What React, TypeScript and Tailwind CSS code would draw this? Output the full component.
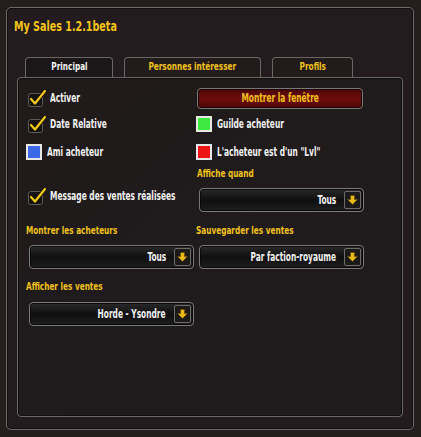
import React from "react";

const FONT = "[font-family:'DejaVu_Sans_Condensed','DejaVu_Sans',sans-serif]";

// the game UI font is much narrower than anything installed, so squeeze the text horizontally
function Narrow({ children, origin = "origin-left" }: { children: React.ReactNode; origin?: string }) {
  return <span className={"inline-block whitespace-nowrap scale-x-[0.69] " + origin}>{children}</span>;
}

function CheckBox({ label }: { label: string }) {
  return (
    <div className="flex h-[16px] items-center">
      <svg width="22" height="18" viewBox="0 0 22 18" className="ml-[1px] shrink-0">
        <rect x="1.5" y="4.5" width="14" height="13" rx="2" fill="#151212" stroke="#5e5a58" />
        <path d="M4 10 L8 14.5 L18 2" fill="none" stroke="#1a1200" strokeWidth="4" strokeLinecap="round" strokeLinejoin="round" />
        <path d="M4 10 L8 14.5 L18 2" fill="none" stroke="#f2c81c" strokeWidth="2.2" strokeLinecap="round" strokeLinejoin="round" />
      </svg>
      <span className="ml-[1px] text-[12px] font-bold text-[#f1f1f1]">
        <Narrow>{label}</Narrow>
      </span>
    </div>
  );
}

function Swatch({ color, label }: { color: string; label: string }) {
  return (
    <div className="flex h-[16px] items-center">
      <div className="h-[16px] w-[16px] shrink-0 border-2 border-[#e8e8e8]" style={{ backgroundColor: color }} />
      <span className="ml-[5px] text-[12px] font-bold text-[#f1f1f1]">
        <Narrow>{label}</Narrow>
      </span>
    </div>
  );
}

function Label({ text, className = "" }: { text: string; className?: string }) {
  return (
    <div className={"h-[14px] whitespace-nowrap text-[11px] font-bold leading-[14px] text-[#f2c21a] " + className}>
      <span className="inline-block origin-left scale-x-[0.74]">{text}</span>
    </div>
  );
}

function Dropdown({ value }: { value: string }) {
  return (
    <div className="ml-[3px] flex h-[24px] w-[165px] items-center rounded-[4px] border border-[#7c7a78] bg-gradient-to-b from-[#2b2b2b] via-[#0f0f0f] to-[#1e1e1e] shadow-[inset_0_0_0_1px_#0a0a0a]">
      <span className="flex-1 whitespace-nowrap pr-[8px] text-right text-[12px] font-bold text-[#f2f2f2]">
        <Narrow origin="origin-right">{value}</Narrow>
      </span>
      <div className="mr-[2px] flex h-[18px] w-[17px] items-center justify-center rounded-[2px] border border-[#6e6c6a] bg-[#1c1a18]">
        <svg width="11" height="10" viewBox="0 0 11 10">
          <path d="M3.5 0.5 H7.5 V4.5 H10.5 L5.5 9.5 L0.5 4.5 H3.5 Z" fill="#e9b916" stroke="#5a4208" strokeWidth="0.6" />
        </svg>
      </div>
    </div>
  );
}

function Tab({ text, active, width }: { text: string; active?: boolean; width: string }) {
  return (
    <div
      className={
        "flex h-[20px] items-center justify-center rounded-t-[4px] border border-b-0 border-[#6a6664] text-[11px] font-bold " +
        width +
        (active ? " bg-[#1b1718] text-[#f4f4f4]" : " bg-[#221b1c] text-[#f2c21a]")
      }
    >
      <span className="inline-block whitespace-nowrap scale-x-[0.74]">{text}</span>
    </div>
  );
}

export default function App() {
  return (
    <div className={"h-[437px] w-[421px] overflow-hidden bg-[#261d1f] pt-[7px] pl-[6px] " + FONT}>
      <div className="h-[423px] w-[408px] rounded-[5px] border border-[#6f6a69] bg-[#231b1d] shadow-[inset_0_0_0_1px_#120e0f]">
        <div className="pl-[7px] pt-[11px] text-[14px] font-bold leading-[14px] text-[#f5c518]">
          <span className="inline-block origin-left scale-x-[0.76]">My Sales 1.2.1beta</span>
        </div>

        <div className="ml-[18px] mt-[24px] flex gap-[11px]">
          <Tab text="Principal" active width="w-[88px]" />
          <Tab text="Personnes intéresser" width="w-[137px]" />
          <Tab text="Profils" width="w-[81px]" />
        </div>

        <div className="ml-[10px] h-[340px] w-[386px] rounded-[4px] border border-[#6a6664] bg-gradient-to-br from-[#201a1a] to-[#1f1c1d] pl-[8px] pt-[8px] shadow-[inset_0_0_0_1px_#110d0e]">
          <div className="grid grid-cols-[170px_1fr]">
            {/* row A */}
            <div className="flex h-[24px] items-center">
              <CheckBox label="Activer" />
            </div>
            <div className="flex h-[24px] items-center">
              <div className="ml-[1px] flex h-[21px] w-[166px] items-center justify-center rounded-[4px] border border-[#7a7674] bg-gradient-to-b from-[#4a0606] via-[#6e0b0b] to-[#4f0707] text-[12px] font-bold text-[#f2c21a] shadow-[inset_0_0_0_1px_#1a0505]">
                <Narrow origin="origin-center">Montrer la fenêtre</Narrow>
              </div>
            </div>

            {/* row B */}
            <div className="flex h-[28px] items-center">
              <CheckBox label="Date Relative" />
            </div>
            <div className="flex h-[28px] items-center">
              <Swatch color="#3fe83f" label="Guilde acheteur" />
            </div>

            {/* row C */}
            <div className="flex h-[28px] items-center">
              <Swatch color="#3a68e6" label="Ami acheteur" />
            </div>
            <div className="flex h-[28px] items-center">
              <Swatch color="#ee1414" label={"L'acheteur est d'un \"Lvl\""} />
            </div>

            {/* row D */}
            <div className="pt-[22px]">
              <CheckBox label="Message des ventes réalisées" />
            </div>
            <div className="pt-[1px]">
              <Label text="Affiche quand" className="ml-[1px]" />
              <div className="mt-[7px]">
                <Dropdown value="Tous" />
              </div>
            </div>

            {/* row E */}
            <div className="pt-[12px]">
              <Label text="Montrer les acheteurs" />
              <div className="mt-[7px]">
                <Dropdown value="Tous" />
              </div>
            </div>
            <div className="pt-[12px]">
              <Label text="Sauvegarder les ventes" />
              <div className="mt-[7px]">
                <Dropdown value="Par faction-royaume" />
              </div>
            </div>

            {/* row F */}
            <div className="pt-[11px]">
              <Label text="Afficher les ventes" />
              <div className="mt-[8px]">
                <Dropdown value="Horde - Ysondre" />
              </div>
            </div>
            <div />
          </div>
        </div>
      </div>
    </div>
  );
}
